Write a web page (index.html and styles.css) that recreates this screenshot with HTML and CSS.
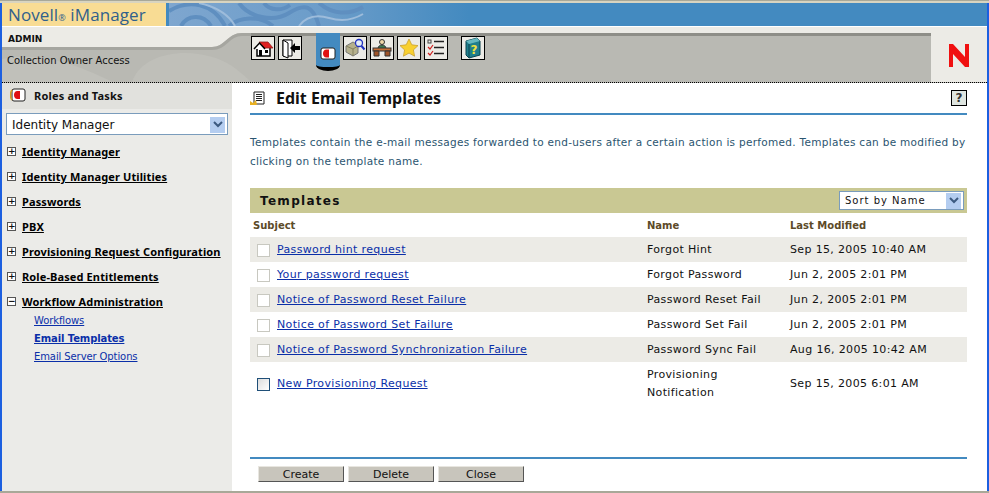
FILE: index.html
```html
<!DOCTYPE html>
<html lang="en">
<head>
    <meta charset="UTF-8">
    <title>Novell iManager - Edit Email Templates</title>
    <link rel="stylesheet" href="styles.css">
</head>
<body>
<div class="page">
    <div class="top-strip"></div>
    <div class="banner">
        <div class="brand">Novell<span class="reg">®</span> iManager</div>
        <div class="banner-art">
            <svg width="300" height="23" viewBox="0 0 300 23">
                <defs>
                    <linearGradient id="fade">
                        <stop offset="0" stop-color="#7ea6cf"/>
                        <stop offset=".55" stop-color="#6a9cc9"/>
                        <stop offset="1" stop-color="#438ac0"/>
                    </linearGradient>
                </defs>
                <rect width="300" height="23" fill="url(#fade)"/>
                <path d="M0 8C20-4 44 0 56 23M12 23C18 12 34 10 42 23M70 0c10 14 34 20 50 10s24-8 30 13M95 0c6 8 18 8 26 2M150 0c14 12 30 12 44 4M60 23C70 14 90 12 104 23" fill="none" stroke="#5f8fc0" stroke-width="4"/>
                <path d="M30 0c18 4 30 12 36 23M130 23c6-8 16-12 30-8s24 2 34-4" fill="none" stroke="#9dbcdb" stroke-width="2"/>
            </svg>
        </div>
    </div>
    <header class="tool-band">
        <div class="user-cell">
            <svg class="user-art" width="249" height="55" viewBox="0 0 249 55">
                <rect width="249" height="55" fill="#b9b9b3"/>
                <path d="M130 55c8-24 40-32 66-28s36 12 53 28z" fill="#bfbfb9"/>
                <path d="M0 32C40 24 80 40 110 55H0z" fill="#c0c0ba"/>
                <path d="M0 0h249v6h-9c-14 0-16 14-30 14H0z" fill="#ecebe6"/>
                <path d="M249 7.500h-9c-14 0-16 14-30 14H0" fill="none" stroke="#a6a6a0" stroke-width="3"/>
            </svg>
            <div class="user-name">ADMIN</div>
            <div class="user-role">Collection Owner Access</div>
        </div>
        <nav class="toolbar">
            <a class="tool" href="#">
                <svg viewBox="0 0 22 22"><path d="M5 11v8h13v-8" fill="#fff" stroke="#000" stroke-width="1.500"/><path d="M7 5h9l5 6H12z" fill="#e02020" stroke="#902020" stroke-width=".8"/><path d="M2 12l5.500-6L13 12" fill="#fff" stroke="#000" stroke-width="1.500"/><rect x="7" y="13" width="3" height="6"/><rect x="13" y="13" width="3" height="3"/></svg>
            </a>
            <a class="tool tool-gap" href="#">
                <svg viewBox="0 0 22 22"><path d="M4 3h9v16H4z" fill="#fff" stroke="#000"/><path d="M4 3l5 3v15l-5-2z" fill="#fff" stroke="#000"/><path d="M11 11l5-5v3h5v4h-5v3z"/></svg>
            </a>
            <a class="role-tab" href="#">
                <svg width="16" height="13" viewBox="0 0 16 13"><rect x="1" y="1" width="14" height="11" rx="2" fill="#fff" stroke="#222"/><path d="M9 2.500H6.500C4 2.500 3 4.500 3 6.500s1 4 3.500 4H9z" fill="#e01010"/></svg>
            </a>
            <a class="tool" href="#">
                <svg viewBox="0 0 22 22"><path d="M2 9l7-4 5 3v8l-5 3-7-4z" fill="#b5b08c" stroke="#777"/><path d="M2 9l7 3 5-3M9 12v7" fill="none" stroke="#85805f"/><circle cx="15" cy="6" r="3.500" fill="#e4eef8" stroke="#2030c0" stroke-width="1.300"/><path d="M17.500 9l3 3.500" stroke="#2030c0" stroke-width="2"/></svg>
            </a>
            <a class="tool" href="#">
                <svg viewBox="0 0 22 22"><circle cx="11" cy="5" r="2.500" fill="#f0d8a8" stroke="#333"/><path d="M7 12c0-3 2-4 4-4s4 1 4 4z" fill="#3c7a50" stroke="#333"/><rect x="2" y="11" width="18" height="3" fill="#c87038" stroke="#333"/><path d="M3 14h5v5H3zM14 14h5v5h-5z" fill="#a05428" stroke="#333"/></svg>
            </a>
            <a class="tool" href="#">
                <svg viewBox="0 0 22 22"><path d="M11 2l2.800 5.800 6.200.8-4.600 4.300 1.200 6.300-5.600-3.100-5.600 3.100 1.200-6.300L2 8.600l6.200-.8z" fill="#f8d030" stroke="#c8a030" stroke-width=".8"/></svg>
            </a>
            <a class="tool tool-wide" href="#">
                <svg viewBox="0 0 22 22"><rect x="3" y="3" width="3" height="3" fill="none" stroke="#444"/><path d="M9 4.500h10M9 10.500h10M9 16.500h10" stroke="#222" stroke-width="1.300"/><path d="M3 10l2 2 3-4M3 16l2 2 3-4" fill="none" stroke="#d02020" stroke-width="1.200"/></svg>
            </a>
            <a class="tool" href="#">
                <svg viewBox="0 0 22 22"><path d="M4 4l11-3 3 3v14l-11 3-3-3z" fill="#1f7f8c" stroke="#0c4450"/><path d="M15 1l3 3-11 3-3-3z" fill="#66b8c0"/><path d="M7 7v14" stroke="#0c4450"/><text class="book-mark" x="12" y="17">?</text></svg>
            </a>
        </nav>
        <div class="logo-cell"><svg width="22" height="24" viewBox="0 0 22 24"><path d="M1 24V1h4l12 13V1h4v23h-4L5 11v13z" fill="#f01010"/></svg></div>
    </header>
    <div class="content">
        <aside class="sidebar">
            <div class="side-head">
                <svg width="16" height="14" viewBox="0 0 16 14"><rect x="2" y="1" width="13" height="12" rx="2" fill="#fff" stroke="#222"/><path d="M2 2C0 4 0 10 2 12" fill="none" stroke="#d8a020" stroke-width="1.500"/><path d="M10 3H7.500C5 3 4 5 4 7s1 4 3.500 4H10z" fill="#e01010"/></svg>
                <span>Roles and Tasks</span>
            </div>
            <div class="select-box side-select">
                <span>Identity Manager</span>
                <i class="select-arrow"><svg width="10" height="7" viewBox="0 0 10 7"><path d="M1 1l4 4 4-4" fill="none" stroke="#3c5a80" stroke-width="2"/></svg></i>
            </div>
            <ul class="tree">
                <li><i class="toggle">+</i><a href="#">Identity Manager</a></li>
                <li><i class="toggle">+</i><a href="#">Identity Manager Utilities</a></li>
                <li><i class="toggle">+</i><a href="#">Passwords</a></li>
                <li><i class="toggle">+</i><a href="#">PBX</a></li>
                <li><i class="toggle">+</i><a href="#">Provisioning Request Configuration</a></li>
                <li><i class="toggle">+</i><a href="#">Role-Based Entitlements</a></li>
                <li><i class="toggle">−</i><a href="#">Workflow Administration</a></li>
            </ul>
            <ul class="subtree">
                <li><a href="#">Workflows</a></li>
                <li><a href="#" class="current">Email Templates</a></li>
                <li><a href="#">Email Server Options</a></li>
            </ul>
        </aside>
        <main class="main">
            <div class="title-row">
                <svg width="16" height="15" viewBox="0 0 16 15"><path d="M4 1h10v12H4z" fill="#fff" stroke="#222"/><path d="M6 3.500h6M6 5.500h6M6 7.500h6M6 9.500h6" stroke="#222"/><path d="M0 10l3 2 3-3 1 5H0z" fill="#e8b020"/></svg>
                <h1>Edit Email Templates</h1>
                <a class="help" href="#">?</a>
            </div>
            <p class="intro">Templates contain the e-mail messages forwarded to end-users after a certain action is perfomed. Templates can be modified by clicking on the template name.</p>
            <div class="band">
                <h2>Templates</h2>
                <div class="select-box sort-select">
                    <span>Sort by Name</span>
                    <i class="select-arrow"><svg width="10" height="7" viewBox="0 0 10 7"><path d="M1 1l4 4 4-4" fill="none" stroke="#3c5a80" stroke-width="2"/></svg></i>
                </div>
            </div>
            <table class="templates">
                <colgroup>
                    <col class="w-check"><col class="w-subject"><col class="w-name"><col>
                </colgroup>
                <thead>
                    <tr><th class="col-subject" colspan="2">Subject</th><th>Name</th><th>Last Modified</th></tr>
                </thead>
                <tbody>
                    <tr><td><i class="check"></i></td><td><a href="#">Password hint request</a></td><td>Forgot Hint</td><td>Sep 15, 2005 10:40 AM</td></tr>
                    <tr><td><i class="check"></i></td><td><a href="#">Your password request</a></td><td>Forgot Password</td><td>Jun 2, 2005 2:01 PM</td></tr>
                    <tr><td><i class="check"></i></td><td><a href="#">Notice of Password Reset Failure</a></td><td>Password Reset Fail</td><td>Jun 2, 2005 2:01 PM</td></tr>
                    <tr><td><i class="check"></i></td><td><a href="#">Notice of Password Set Failure</a></td><td>Password Set Fail</td><td>Jun 2, 2005 2:01 PM</td></tr>
                    <tr><td><i class="check"></i></td><td><a href="#">Notice of Password Synchronization Failure</a></td><td>Password Sync Fail</td><td>Aug 16, 2005 10:42 AM</td></tr>
                    <tr class="tall"><td><i class="check check-on"></i></td><td><a href="#">New Provisioning Request</a></td><td>Provisioning<br>Notification</td><td>Sep 15, 2005 6:01 AM</td></tr>
                </tbody>
            </table>
            <div class="actions">
                <button type="button">Create</button>
                <button type="button">Delete</button>
                <button type="button">Close</button>
            </div>
        </main>
    </div>
    <div class="bottom-strip"></div>
</div>
</body>
</html>
```
FILE: styles.css
```css
:root {
    --blue: #438ac0;
    --light: #ecebe6;
    --gray: #b9b9b3;
    --link: #0a2fa8;
    --font-ui: "DejaVu Sans", Verdana, sans-serif;
    --font-head: "Noto Sans", "DejaVu Sans", sans-serif;
}
html, body {
    margin: 0;
    height: 100%;
    overflow: hidden;
}
body {
    font-family: var(--font-ui);
    font-size: 10px;
    color: #111;
    background: #fff;
}
.page {
    height: 493px;
    display: flex;
    flex-direction: column;
    border-left: 2px solid #1c5fe0;
    border-right: 2px solid #1c5fe0;
    box-sizing: border-box;
}
.top-strip {
    height: 3px;
    background: #d8d4c0;
    border-top: 1px solid #a8a898;
    box-sizing: border-box;
    margin-left: -2px;
    margin-right: -2px;
}

/* banner */
.banner {
    display: flex;
    height: 24px;
    box-sizing: border-box;
    background: var(--blue);
    border-bottom: 1px solid #fff;
}
.brand {
    width: 164px;
    background: #f8dc94;
    color: #30608c;
    font-family: "Open Sans", sans-serif;
    font-size: 17px;
    letter-spacing: .1px;
    line-height: 23px;
    padding-left: 6px;
    box-sizing: border-box;
    white-space: nowrap;
}
.reg { font-size: 9px; }
.banner-art {
    margin-left: 3px;
    height: 23px;
}
.banner-art svg { display: block; }

/* user + toolbar */
.tool-band {
    display: flex;
    height: 56px;
    background: var(--gray);
    border-bottom: 1px dotted #000;
    box-sizing: border-box;
    flex-shrink: 0;
}
.user-cell {
    width: 249px;
    position: relative;
    flex-shrink: 0;
}
.user-art {
    position: absolute;
    left: 0;
    top: 0;
}
.user-name, .user-role {
    position: relative;
}
.user-name {
    font-size: 9px;
    font-weight: bold;
    padding: 6px 0 0 6px;
    line-height: 12px;
}
.user-role {
    margin-top: 9px;
    padding-left: 5px;
    line-height: 14px;
}
.toolbar {
    flex: 1;
    display: flex;
    align-items: flex-start;
    gap: 3px;
    background: linear-gradient(#ecebe6 6px, #8e8e88 6px, #8e8e88 9px, transparent 9px);
    padding-top: 9px;
}
.tool {
    width: 22px;
    height: 22px;
    border: 1px solid #000;
    background: var(--light);
    display: block;
}
.tool svg {
    display: block;
    width: 22px;
    height: 22px;
}
.tool-gap { margin-right: 11px; }
.tool-wide { margin-right: 10px; }
.role-tab {
    width: 24px;
    height: 38px;
    margin-top: -3px;
    background: var(--blue);
    border-bottom: 4px solid #000;
    border-radius: 0 0 12px 12px / 0 0 6px 6px;
    box-sizing: border-box;
    display: flex;
    justify-content: center;
    padding-top: 14px;
}
.book-mark {
    font-family: "DejaVu Sans", sans-serif;
    font-size: 12px;
    font-weight: bold;
    fill: #f0e040;
    text-anchor: middle;
}
.logo-cell {
    width: 56px;
    background: var(--light);
    display: flex;
    justify-content: center;
    align-items: flex-start;
    padding-top: 16px;
    box-sizing: border-box;
    flex-shrink: 0;
}

.content {
    flex: 1;
    display: flex;
    min-height: 0;
}

/* sidebar */
.sidebar {
    width: 230px;
    background: #ebebe8;
    flex-shrink: 0;
}
.side-head {
    height: 26px;
    padding-bottom: 2px;
    box-sizing: border-box;
    background: #e1e1dd;
    display: flex;
    align-items: center;
    gap: 8px;
    padding-left: 8px;
    font-family: var(--font-head);
    font-size: 11px;
    letter-spacing: .2px;
    font-weight: bold;
}
.select-box {
    display: flex;
    align-items: center;
    justify-content: space-between;
    background: #fff;
    border: 1px solid #7a9cbc;
    box-sizing: border-box;
}
.side-select {
    margin: 4px 4px 0 4px;
    height: 22px;
    padding: 1px 2px 0 5px;
    font-size: 12px;
}
.select-arrow {
    width: 15px;
    height: 16px;
    background: #b4cdf0;
    display: flex;
    align-items: center;
    justify-content: center;
}
.tree {
    list-style: none;
    margin: 0;
    padding: 4px 0 0 5px;
}
.tree li {
    height: 25px;
    display: flex;
    align-items: center;
    gap: 6px;
}
.tree a {
    color: #000;
    font-family: var(--font-head);
    font-size: 11px;
    letter-spacing: .12px;
    font-weight: bold;
    text-decoration: underline;
    white-space: nowrap;
}
.toggle {
    width: 7px;
    height: 7px;
    border: 1px solid #555;
    background: #fff;
    font-style: normal;
    font-size: 9px;
    line-height: 7px;
    text-align: center;
    font-weight: bold;
}
.subtree {
    list-style: none;
    margin: -2px 0 0;
    padding: 0 0 0 32px;
}
.subtree li {
    height: 18px;
    line-height: 18px;
}
.subtree a {
    color: var(--link);
    letter-spacing: -.1px;
}
.subtree .current { font-weight: bold; }

/* main panel */
.main {
    flex: 1;
    padding: 0 20px 0 18px;
    min-width: 0;
    display: flex;
    flex-direction: column;
}
.title-row {
    height: 32px;
    box-sizing: border-box;
    display: flex;
    align-items: center;
    gap: 10px;
    border-bottom: 2px solid var(--blue);
    flex-shrink: 0;
}
.title-row h1 {
    flex: 1;
    margin: 0;
    font-family: var(--font-head);
    font-size: 16px;
    font-weight: bold;
}
.help {
    width: 14px;
    height: 14px;
    border: 1px solid #000;
    background: #dfe5e0;
    color: #333;
    font-size: 12px;
    line-height: 14px;
    text-align: center;
    text-decoration: none;
    font-weight: bold;
}
.intro {
    margin: 18px 0 0;
    color: #2b5570;
    font-size: 10.500px;
    line-height: 19px;
    height: 38px;
    letter-spacing: .3px;
    flex-shrink: 0;
}
.band {
    margin-top: 17px;
    height: 25px;
    background: #c9c893;
    display: flex;
    align-items: center;
    justify-content: space-between;
    padding: 0 3px 0 10px;
    flex-shrink: 0;
}
.band h2 {
    margin: 0;
    font-size: 12px;
    letter-spacing: 1.300px;
}
.sort-select {
    width: 125px;
    height: 19px;
    padding: 0 2px 0 5px;
    letter-spacing: 1px;
}
.templates {
    width: 100%;
    border-collapse: collapse;
    table-layout: fixed;
    flex-shrink: 0;
}
.w-check { width: 27px; }
.w-subject { width: 370px; }
.w-name { width: 143px; }
.templates th {
    height: 24px;
    box-sizing: border-box;
    text-align: left;
    color: #5c4a28;
    font-weight: bold;
    padding: 0;
}
.templates .col-subject { padding-left: 3px; }
.templates td {
    height: 25px;
    padding: 1px 0 0;
    box-sizing: border-box;
    font-size: 11px;
    letter-spacing: .35px;
    line-height: 18px;
}
.templates tbody tr:nth-child(odd) { background: var(--light); }
.templates .tall td { height: 43px; }
.templates a { color: var(--link); }
.check {
    display: block;
    width: 11px;
    height: 11px;
    margin-left: 7px;
    border: 1px solid #c8c8c0;
    background: #fff;
}
.check-on {
    border-color: #1f4f78;
    background: linear-gradient(135deg, #ddd, #fff);
}
.actions {
    margin-top: auto;
    border-top: 2px solid var(--blue);
    padding: 7px 0 9px 8px;
    display: flex;
    gap: 4px;
}
.actions button {
    width: 86px;
    height: 16px;
    padding: 1px 0 0;
    font-family: var(--font-ui);
    font-size: 11px;
    line-height: 12px;
    color: #111;
    background: #c8c5bc;
    border: 1px solid;
    border-color: #e8e6e0 #555 #555 #e8e6e0;
}
.bottom-strip {
    height: 2px;
    background: #a8a898;
    margin: 0 -2px;
}
```
